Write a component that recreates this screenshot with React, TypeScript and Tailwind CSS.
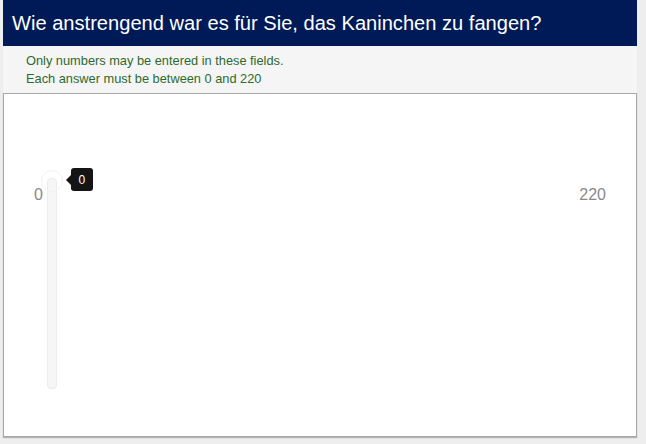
import React from "react";

export default function App() {
  return (
    <div
      className="h-[444px] w-[646px] bg-[#eeeeee] pl-[3px] pr-[9px] overflow-hidden"
      style={{ fontFamily: '"Liberation Sans", Arial, sans-serif' }}
    >
      <div className="h-[46px] bg-[#001a57] pl-[9px] pt-[11px] text-[20.1px] leading-[24px] text-white">
        Wie anstrengend war es für Sie, das Kaninchen zu fangen?
      </div>
      <div className="h-[47px] bg-[#f5f5f5] pl-[23px] pt-[6px] text-[12.8px] leading-[18px] text-[#2d6a2d]">
        <div>Only numbers may be entered in these fields.</div>
        <div>Each answer must be between 0 and 220</div>
      </div>
      <div className="h-[344px] border border-[#a9a9a9] bg-white shadow-[0_1px_1px_rgba(0,0,0,0.25)] flex items-start pl-[30px] pr-[30px] pt-[84px]">
        <div className="mt-[8px] text-[16px] leading-[18px] text-[#8a8a8a]">0</div>
        <div className="relative ml-[4px] h-[211px] w-[10px] rounded-[4px] border border-[#ececec] bg-[#f6f6f6]">
          <div className="absolute left-1/2 top-[-9px] h-[22px] w-[22px] -translate-x-1/2 rounded-full border border-[#f2f2f2] bg-transparent" />
          <div className="absolute left-[23px] top-[-11px] flex h-[23px] w-[22px] items-center justify-center rounded-[3px] bg-[#141414] text-[12px] text-white">
            0
            <div className="absolute left-[-5px] top-1/2 h-0 w-0 -translate-y-1/2 border-y-[5px] border-r-[5px] border-y-transparent border-r-[#141414]" />
          </div>
        </div>
        <div className="flex-1" />
        <div className="mt-[8px] text-[16px] leading-[18px] text-[#8a8a8a]">220</div>
      </div>
    </div>
  );
}
